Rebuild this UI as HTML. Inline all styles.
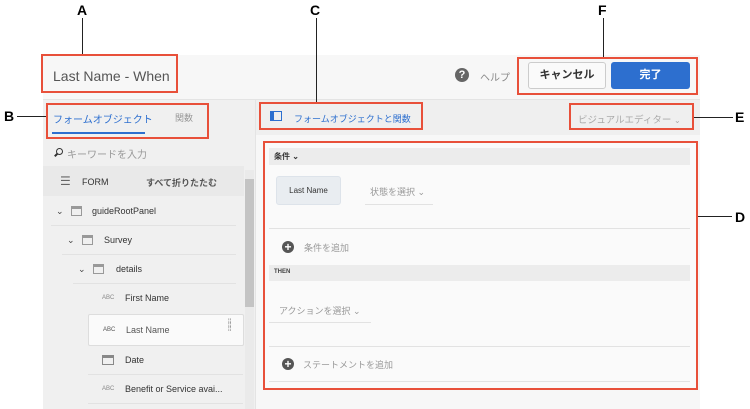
<!DOCTYPE html>
<html><head><meta charset="utf-8"><style>
*{margin:0;padding:0;box-sizing:border-box}
body{width:750px;height:409px;background:#fff;position:relative;overflow:hidden;font-family:"Liberation Sans","Noto Sans CJK JP",sans-serif;color:#333}
.a{position:absolute}
.red{position:absolute;border:2px solid #e8503a}
.lbl{position:absolute;font-weight:bold;font-size:14px;color:#000}
.ln{position:absolute;background:#222}
.t{position:absolute;font-size:9px;white-space:nowrap}
.sep{position:absolute;height:1px;background:#e2e2e2}
.plus{position:absolute;width:12px;height:12px;border-radius:50%;background:#555;color:#fff;font-size:12px;line-height:12px;text-align:center;font-weight:bold}
.ic{position:absolute;width:11px;height:10px;border:1.5px solid #999;border-top-width:3px}
.chev{position:absolute;font-size:9px;color:#444}
</style></head><body>
<div class="a" style="left:43px;top:55px;width:657px;height:44px;background:#f7f7f7"></div>
<div class="a" style="left:43px;top:99px;width:213px;height:310px;background:#f0f0f0"></div>
<div class="a" style="left:256px;top:99px;width:444px;height:310px;background:#f7f7f7"></div>
<div class="a" style="left:256px;top:99px;width:444px;height:36px;background:#efefef"></div>
<div class="a" style="left:43px;top:99px;width:657px;height:1px;background:#e4e4e4"></div>
<div class="a" style="left:255px;top:99px;width:1px;height:310px;background:#e4e4e4"></div>
<div class="a" style="left:264px;top:142px;width:432px;height:246px;background:#fafafa"></div>

<div class="t" style="left:53px;top:68px;font-size:14px;color:#555">Last Name - When</div>
<div class="a" style="left:455px;top:68px;width:14px;height:14px;border-radius:50%;background:#666;color:#fff;font-size:11px;font-weight:bold;text-align:center;line-height:14px">?</div>
<div class="t" style="left:480px;top:69px;font-size:10px;color:#888">ヘルプ</div>
<div class="a" style="left:528px;top:62px;width:78px;height:27px;border:1px solid #ccc;border-radius:3px;background:#fafafa;font-size:11px;font-weight:bold;text-align:center;line-height:25px">キャンセル</div>
<div class="a" style="left:611px;top:62px;width:79px;height:27px;border-radius:3px;background:#2d6fcf;color:#fff;font-size:11px;font-weight:bold;text-align:center;line-height:27px">完了</div>

<div class="t" style="left:53px;top:111px;font-size:10px;color:#2d6fcf">フォームオブジェクト</div>
<div class="a" style="left:52px;top:132px;width:93px;height:2px;background:#2d6fcf"></div>
<div class="t" style="left:175px;top:111px;font-size:9px;color:#999">関数</div>
<div class="a" style="left:56px;top:148px;width:7px;height:7px;border:1.5px solid #333;border-radius:50%"></div>
<div class="a" style="left:54px;top:154px;width:4px;height:1.5px;background:#333;transform:rotate(-45deg)"></div>
<div class="t" style="left:67px;top:146px;font-size:10px;color:#999">キーワードを入力</div>
<div class="a" style="left:43px;top:166px;width:201px;height:30px;background:#e9e9e9"></div>
<div class="t" style="left:60px;top:174px;font-size:12px;color:#666">☰</div>
<div class="t" style="left:82px;top:177px;">FORM</div>
<div class="t" style="left:146px;top:176px;font-weight:bold;color:#555">すべて折りたたむ</div>
<div class="a" style="left:245px;top:170px;width:9px;height:239px;background:#eaeaea"></div>
<div class="a" style="left:245px;top:179px;width:9px;height:128px;background:#c4c4c4"></div>

<div class="chev" style="left:56px;top:206px">⌄</div><div class="ic" style="left:71px;top:206px"></div><div class="t" style="left:92px;top:206px">guideRootPanel</div>
<div class="sep" style="left:51px;top:225px;width:185px"></div>
<div class="chev" style="left:67px;top:235px">⌄</div><div class="ic" style="left:82px;top:235px"></div><div class="t" style="left:104px;top:235px">Survey</div>
<div class="sep" style="left:62px;top:254px;width:174px"></div>
<div class="chev" style="left:78px;top:264px">⌄</div><div class="ic" style="left:93px;top:264px"></div><div class="t" style="left:116px;top:264px">details</div>
<div class="sep" style="left:73px;top:283px;width:163px"></div>
<div class="t" style="left:102px;top:295px;font-size:6px;color:#888">ABC</div><div class="t" style="left:125px;top:293px">First Name</div>
<div class="a" style="left:88px;top:314px;width:156px;height:32px;background:#fafafa;border:1px solid #ddd;border-radius:2px"></div>
<div class="t" style="left:103px;top:327px;font-size:6px;color:#555">ABC</div><div class="t" style="left:126px;top:325px;color:#555">Last Name</div>
<div class="t" style="left:228px;top:320px;font-size:6px;line-height:4px;color:#555">⁞⁞<br>⁞⁞<br>⁞⁞</div>
<div class="a" style="left:102px;top:355px;width:12px;height:10px;border:1.5px solid #888;border-top-width:3px"></div><div class="t" style="left:125px;top:355px">Date</div>
<div class="sep" style="left:88px;top:374px;width:155px"></div>
<div class="t" style="left:102px;top:386px;font-size:6px;color:#888">ABC</div><div class="t" style="left:125px;top:384px">Benefit or Service avai...</div>
<div class="sep" style="left:88px;top:403px;width:155px"></div>

<div class="a" style="left:270px;top:111px;width:12px;height:10px;border:1.5px solid #2d6fcf;border-left-width:4px"></div>
<div class="t" style="left:294px;top:112px;font-size:9px;color:#2d6fcf">フォームオブジェクトと関数</div>
<div class="t" style="left:578px;top:112px;font-size:9.5px;color:#aaa">ビジュアルエディター <span style="font-size:8px">⌄</span></div>

<div class="a" style="left:269px;top:148px;width:421px;height:17px;background:#ececec"></div>
<div class="t" style="left:274px;top:151px;font-size:8px;font-weight:bold">条件 ⌄</div>
<div class="a" style="left:276px;top:176px;width:65px;height:29px;background:#e9edf1;border-radius:3px;border:1px solid #dde3ea;font-size:8px;text-align:center;line-height:27px">Last Name</div>
<div class="t" style="left:370px;top:185px;font-size:9px;color:#999">状態を選択 ⌄</div>
<div class="sep" style="left:365px;top:204px;width:68px"></div>
<div class="sep" style="left:269px;top:228px;width:421px"></div>
<div class="plus" style="left:282px;top:241px">+</div>
<div class="t" style="left:304px;top:241px;font-size:9px;color:#999">条件を追加</div>
<div class="a" style="left:269px;top:265px;width:421px;height:16px;background:#ececec"></div>
<div class="t" style="left:274px;top:269px;font-size:6px;font-weight:bold;color:#444">THEN</div>
<div class="t" style="left:279px;top:304px;font-size:9px;color:#999">アクションを選択 ⌄</div>
<div class="sep" style="left:269px;top:322px;width:102px"></div>
<div class="sep" style="left:269px;top:346px;width:421px"></div>
<div class="plus" style="left:282px;top:358px">+</div>
<div class="t" style="left:303px;top:358px;font-size:9px;color:#999">ステートメントを追加</div>
<div class="sep" style="left:269px;top:381px;width:421px"></div>

<div class="red" style="left:41px;top:54px;width:137px;height:39px"></div>
<div class="red" style="left:46px;top:103px;width:163px;height:36px"></div>
<div class="red" style="left:259px;top:102px;width:164px;height:28px"></div>
<div class="red" style="left:263px;top:141px;width:435px;height:249px"></div>
<div class="red" style="left:569px;top:103px;width:125px;height:27px"></div>
<div class="red" style="left:517px;top:57px;width:181px;height:38px"></div>

<div class="lbl" style="left:77px;top:2px">A</div><div class="ln" style="left:82px;top:18px;width:1px;height:36px"></div>
<div class="lbl" style="left:310px;top:2px">C</div><div class="ln" style="left:316px;top:18px;width:1px;height:84px"></div>
<div class="lbl" style="left:598px;top:2px">F</div><div class="ln" style="left:603px;top:18px;width:1px;height:39px"></div>
<div class="lbl" style="left:4px;top:108px">B</div><div class="ln" style="left:17px;top:116px;width:29px;height:1px"></div>
<div class="lbl" style="left:735px;top:109px">E</div><div class="ln" style="left:694px;top:117px;width:39px;height:1px"></div>
<div class="lbl" style="left:735px;top:209px">D</div><div class="ln" style="left:698px;top:216px;width:34px;height:1px"></div>
</body></html>
